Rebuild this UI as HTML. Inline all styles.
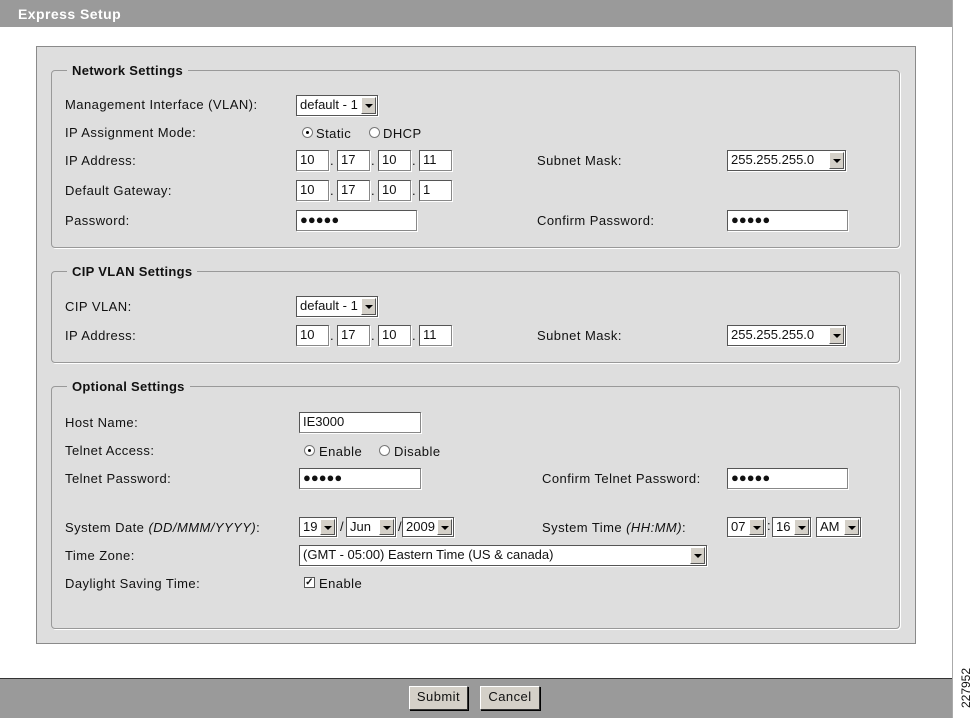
<!DOCTYPE html>
<html><head><style>
*{margin:0;padding:0;box-sizing:border-box}
body{width:972px;height:718px;position:relative;background:#fff;font-family:"Liberation Sans",sans-serif;font-size:13px;color:#111;overflow:hidden;letter-spacing:0.45px}
.a{position:absolute}
.t{position:absolute;white-space:nowrap;line-height:16px}
.in{position:absolute;background:#fff;border:1px solid #888;border-top-color:#555;border-left-color:#555;box-shadow:1px 1px 0 #fff;font-size:13px;line-height:18px;padding-left:3px;white-space:nowrap;overflow:hidden;letter-spacing:0}
.sel{position:absolute;background:#fff;border:1px solid #555;box-shadow:1px 1px 0 #fff;font-size:13px;line-height:18px;padding-left:3px;white-space:nowrap;overflow:hidden;letter-spacing:0}
.sel b{position:absolute;right:1px;top:1px;width:15px;bottom:1px;background:#d4d0c8;border:1px solid;border-color:#fff #555 #555 #fff}
.sel b:after{content:"";position:absolute;left:3px;top:6px;border-left:4px solid transparent;border-right:4px solid transparent;border-top:4px solid #000}
.fs{position:absolute;border:1px solid #999;border-radius:4px;box-shadow:1px 1px 0 #fff}
.lg{position:absolute;background:#dedede;font-weight:bold;padding:0 5px;line-height:16px;font-size:13px;letter-spacing:0.3px}
.rad{position:absolute;width:11px;height:11px;border-radius:50%;background:#fff;border:1px solid #777}
.rad.on:after{content:"";position:absolute;left:3px;top:3px;width:3px;height:3px;background:#000;border-radius:50%}
.dot{position:absolute;font-size:13px}
.btn{position:absolute;background:#d4d0c8;border:1px solid;border-color:#fff #333 #333 #fff;box-shadow:1px 1px 0 #000;text-align:center;line-height:20px;font-size:13px}
</style></head><body>
<div class="a" style="left:0;top:0;width:952px;height:27px;background:#9a9a9a"></div>
<div class="t" style="left:18px;top:6px;color:#fff;font-weight:bold;font-size:14px">Express Setup</div>
<div class="a" style="left:952px;top:0;width:1px;height:718px;background:#aaa"></div>
<div class="a" style="left:36px;top:46px;width:880px;height:598px;background:#dedede;border:1px solid #8a8a8a"></div>

<div class="fs" style="left:51px;top:70px;width:849px;height:178px"></div>
<div class="lg" style="left:67px;top:63px">Network Settings</div>
<div class="t" style="left:65px;top:97px">Management Interface (VLAN):</div>
<div class="sel" style="left:296px;top:95px;width:82px;height:21px">default - 1<b></b></div>
<div class="t" style="left:65px;top:125px">IP Assignment Mode:</div>
<div class="rad on" style="left:302px;top:127px"></div><div class="t" style="left:316px;top:126px">Static</div>
<div class="rad" style="left:369px;top:127px"></div><div class="t" style="left:383px;top:126px">DHCP</div>
<div class="t" style="left:65px;top:153px">IP Address:</div>
<div class="in" style="left:296px;top:150px;width:33px;height:21px">10</div><div class="dot" style="left:330px;top:153px">.</div>
<div class="in" style="left:337px;top:150px;width:33px;height:21px">17</div><div class="dot" style="left:371px;top:153px">.</div>
<div class="in" style="left:378px;top:150px;width:33px;height:21px">10</div><div class="dot" style="left:412px;top:153px">.</div>
<div class="in" style="left:419px;top:150px;width:33px;height:21px">11</div>
<div class="t" style="left:537px;top:153px">Subnet Mask:</div>
<div class="sel" style="left:727px;top:150px;width:119px;height:21px">255.255.255.0<b></b></div>
<div class="t" style="left:65px;top:183px">Default Gateway:</div>
<div class="in" style="left:296px;top:180px;width:33px;height:21px">10</div><div class="dot" style="left:330px;top:183px">.</div>
<div class="in" style="left:337px;top:180px;width:33px;height:21px">17</div><div class="dot" style="left:371px;top:183px">.</div>
<div class="in" style="left:378px;top:180px;width:33px;height:21px">10</div><div class="dot" style="left:412px;top:183px">.</div>
<div class="in" style="left:419px;top:180px;width:33px;height:21px">1</div>
<div class="t" style="left:65px;top:213px">Password:</div>
<div class="in" style="left:296px;top:210px;width:121px;height:21px">●●●●●</div>
<div class="t" style="left:537px;top:213px">Confirm Password:</div>
<div class="in" style="left:727px;top:210px;width:121px;height:21px">●●●●●</div>

<div class="fs" style="left:51px;top:271px;width:849px;height:92px"></div>
<div class="lg" style="left:67px;top:264px">CIP VLAN Settings</div>
<div class="t" style="left:65px;top:299px">CIP VLAN:</div>
<div class="sel" style="left:296px;top:296px;width:82px;height:21px">default - 1<b></b></div>
<div class="t" style="left:65px;top:328px">IP Address:</div>
<div class="in" style="left:296px;top:325px;width:33px;height:21px">10</div><div class="dot" style="left:330px;top:328px">.</div>
<div class="in" style="left:337px;top:325px;width:33px;height:21px">17</div><div class="dot" style="left:371px;top:328px">.</div>
<div class="in" style="left:378px;top:325px;width:33px;height:21px">10</div><div class="dot" style="left:412px;top:328px">.</div>
<div class="in" style="left:419px;top:325px;width:33px;height:21px">11</div>
<div class="t" style="left:537px;top:328px">Subnet Mask:</div>
<div class="sel" style="left:727px;top:325px;width:119px;height:21px">255.255.255.0<b></b></div>

<div class="fs" style="left:51px;top:386px;width:849px;height:243px"></div>
<div class="lg" style="left:67px;top:379px">Optional Settings</div>
<div class="t" style="left:65px;top:415px">Host Name:</div>
<div class="in" style="left:299px;top:412px;width:122px;height:21px">IE3000</div>
<div class="t" style="left:65px;top:443px">Telnet Access:</div>
<div class="rad on" style="left:304px;top:445px"></div><div class="t" style="left:319px;top:444px">Enable</div>
<div class="rad" style="left:379px;top:445px"></div><div class="t" style="left:394px;top:444px">Disable</div>
<div class="t" style="left:65px;top:471px">Telnet Password:</div>
<div class="in" style="left:299px;top:468px;width:122px;height:21px">●●●●●</div>
<div class="t" style="left:542px;top:471px">Confirm Telnet Password:</div>
<div class="in" style="left:727px;top:468px;width:121px;height:21px">●●●●●</div>
<div class="t" style="left:65px;top:520px">System Date <i>(DD/MMM/YYYY)</i>:</div>
<div class="sel" style="left:299px;top:517px;width:38px;height:20px">19<b></b></div><div class="dot" style="left:340px;top:519px">/</div>
<div class="sel" style="left:346px;top:517px;width:50px;height:20px">Jun<b></b></div><div class="dot" style="left:398px;top:519px">/</div>
<div class="sel" style="left:402px;top:517px;width:52px;height:20px">2009<b></b></div>
<div class="t" style="left:542px;top:520px">System Time <i>(HH:MM)</i>:</div>
<div class="sel" style="left:727px;top:517px;width:39px;height:20px">07<b></b></div><div class="dot" style="left:767px;top:518px">:</div>
<div class="sel" style="left:772px;top:517px;width:39px;height:20px">16<b></b></div>
<div class="sel" style="left:816px;top:517px;width:45px;height:20px">AM<b></b></div>
<div class="t" style="left:65px;top:548px">Time Zone:</div>
<div class="sel" style="left:299px;top:545px;width:408px;height:21px">(GMT - 05:00) Eastern Time (US &amp; canada)<b></b></div>
<div class="t" style="left:65px;top:576px">Daylight Saving Time:</div>
<div class="a" style="left:304px;top:577px;width:11px;height:11px;background:#fff;border:1px solid #555;font-size:10px;line-height:9px;text-align:center;font-weight:bold">✓</div>
<div class="t" style="left:319px;top:576px">Enable</div>

<div class="a" style="left:0;top:678px;width:952px;height:40px;background:#9a9a9a;border-top:1px solid #333"></div>
<div class="btn" style="left:409px;top:686px;width:59px;height:24px">Submit</div>
<div class="btn" style="left:480px;top:686px;width:60px;height:24px">Cancel</div>
<div class="t" style="left:946px;top:680px;transform:rotate(-90deg);font-size:12px;transform-origin:center;letter-spacing:0">227952</div>
</body></html>
